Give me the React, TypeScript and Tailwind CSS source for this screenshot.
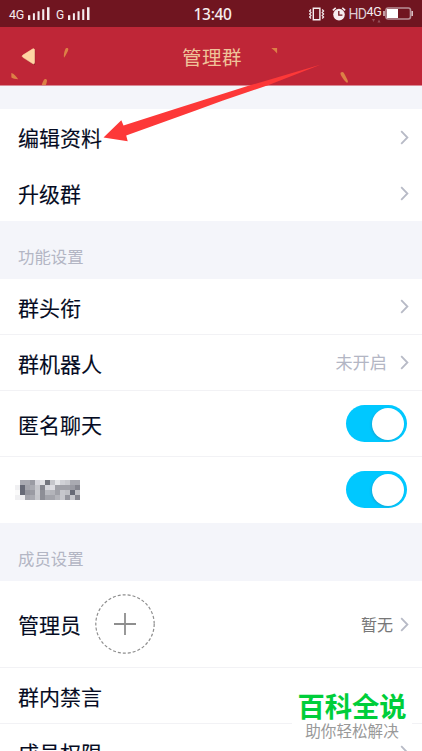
import React from "react";

const Chevron = () => (
  <svg className="h-[15px] w-[9px] shrink-0" viewBox="0 0 9 15" fill="none" stroke="#b7bac6" strokeWidth="1.8">
    <path d="M1.200 1.200 7.400 7.500 1.200 13.800" />
  </svg>
);

const Switch = () => (
  <div role="switch" aria-checked="true" className="flex h-[37px] w-[61px] items-center justify-end rounded-full bg-[#00c8ff] pr-[3px]">
    <span className="h-[32px] w-[32px] rounded-full bg-white shadow-[-1px_1px_2px_rgba(60,110,140,0.3)]" />
  </div>
);

const Row = ({ label, size, right }: { label: React.ReactNode; size: string; right?: React.ReactNode }) => (
  <div className={`flex shrink-0 items-center justify-between border-[#f2f2f5] bg-white pl-[18px] ${size}`}>
    <div className="flex items-center text-[21px] leading-[30px] text-[#050b22] [-webkit-text-stroke:0.12px_#050b22]">{label}</div>
    <div className="flex items-center">{right}</div>
  </div>
);

const Section = ({ children }: { children: React.ReactNode }) => (
  <div className="h-[58px] shrink-0 bg-[#f4f5fa] pt-[23px] pl-[18px] text-[16.400px] leading-[24px] text-[#b3b6c4]">{children}</div>
);

const Signal = () => (
  <svg className="h-[14px] w-[22px]" viewBox="0 0 22 14" fill="#f5edef">
    <path d="M0 8.300h2.300V13H0zM4.900 6.300h2v6.700h-2zM9.500 4.300h2.100V13H9.500zM14.200 2.300h2.100V13h-2.100zM19 .2h2.500V13H19z" />
  </svg>
);

const tones = [
  ["#ffffff", "#a9aab1", "#a9aab1", "#9a9ba3", "#d6d6dc", "#e2e2e6", "#74767f", "#c6c7cc", "#e6e7ea", "#d0d1d6", "#c9cacf", "#a9aab1", "#a9aab1"],
  ["#f0f0f2", "#676a76", "#a3a4ab", "#a9aab1", "#c6c7cc", "#85868f", "#d6d6dc", "#dddde2", "#a0a1a8", "#a0a1a8", "#a0a1a8", "#9a9ba3", "#85868f"],
  ["#fafafa", "#676a76", "#94959d", "#9a9ba3", "#c9cacf", "#8d8e96", "#b9bac0", "#b3b4ba", "#a0a1a8", "#c6c7cc", "#bfc0c5", "#676a76", "#bfc0c5"],
  ["#f0f0f2", "#ececee", "#a3a4ab", "#a9aab1", "#c6c7cc", "#8d8e96", "#a3a4ab", "#a3a4ab", "#b3b4ba", "#c6c7cc", "#94959d", "#c6c7cc", "#85868f"],
];

const Mosaic = () => (
  <div className="-ml-[3px] grid grid-cols-[repeat(13,5px)]">
    {tones.flat().map((c, i) => (
      <span key={i} className="h-[5px]" style={{ backgroundColor: c }} />
    ))}
  </div>
);

const StatusBar = () => (
  <div className="flex h-[27px] shrink-0 items-center bg-[#701520] font-['Roboto','Liberation_Sans',sans-serif] text-[#f5edef]">
    <div className="flex w-[193.500px] items-center pl-[9px]">
      <span className="w-[19px] pt-[3px] text-[12.500px] leading-[14px] tracking-[-0.300px]">4G</span>
      <Signal />
      <span className="ml-[6px] w-[12px] pt-[3px] text-[12px] leading-[14px]">G</span>
      <Signal />
    </div>
    <span className="w-[115.500px] font-['Noto_Sans',sans-serif] text-[15.500px] leading-[20px] font-medium tracking-[-0.300px]">13:40</span>
    <svg className="h-[14px] w-[16px]" viewBox="0 0 16 14" fill="none" stroke="#f5edef" strokeWidth="1.400">
      <path d="M4.300 1.200h6.600v11.600H4.300z" />
      <path d="M2 2.500.6 4 2 5.500.6 7 2 8.500.6 10 2 11.500M13.200 2.500l1.400 1.500-1.400 1.500L14.600 7l-1.400 1.500 1.400 1.500-1.400 1.500" strokeWidth="1.200" />
    </svg>
    <svg className="ml-[7px] h-[14px] w-[14px]" viewBox="0 0 14 14" fill="none">
      <circle cx="7" cy="7.600" r="5.800" fill="#f5edef" />
      <path d="M.8 3.400 3.700.9M13.200 3.400 10.300.9" stroke="#f5edef" strokeWidth="1.500" />
      <path d="M6.800 4v4.200h3.600" stroke="#701520" strokeWidth="1.300" />
    </svg>
    <span className="ml-[2.500px] w-[18px] text-[14px] leading-[16px] tracking-[-0.800px] text-[#dccbd0]">HD</span>
    <div className="flex h-[20px] w-[16px] flex-col">
      <span className="pt-[1px] text-[12.500px] leading-[14px] tracking-[-0.400px]">4G</span>
      <svg className="ml-[5px] h-[4px] w-[9px]" viewBox="0 0 9 4" fill="#93505a">
        <path d="M0 0h3L1.500 3zM5.500 3.500h3L7 .5z" />
      </svg>
    </div>
    <svg className="ml-[0.500px] h-[13px] w-[31px]" viewBox="0 0 31 13" fill="none">
      <rect x="3" y="1" width="24.500" height="11" rx="2.200" stroke="#b89097" strokeWidth="1.600" />
      <path d="M4 2h11v9H4z" fill="#fff" />
      <path d="M1 4v5M29.200 4v5" stroke="#d8bfc4" strokeWidth="1.600" />
    </svg>
  </div>
);

const Header = () => (
  <div className="relative flex h-[59px] shrink-0 items-center justify-center border-b border-[#d98a96] bg-[#bf2637]">
    <svg className="absolute inset-0 h-[58px] w-[422px]" viewBox="0 0 422 58">
      <path d="M34 23v12.500c0 1.500-1 1.700-2 1l-8.900-6c-.9-.7-.9-1.500 0-2.200l8.900-6c1-.7 2-.7 2 .7z" fill="#6f1822" opacity=".6" transform="translate(1.200 1)" />
      <path d="M34.500 23v12.500c0 1.500-1 1.700-2 1l-9.600-6.200c-.9-.7-.9-1.500 0-2.200l9.600-6c1-.7 2-.4 2 .9z" fill="#ffd5a3" stroke="#ffd5a3" strokeWidth=".6" />
      <g fill="#dc8046">
        <path d="M65.300 22.200c.5-1.600 3.200-1.500 3 .2-.2 2-2.500 5.500-4.300 8.400-.5-2.500.2-6 1.300-8.600z" />
        <path d="M11.300 46c2.800.7 4.500 3 6.900 6.200-3-.2-5.200-.6-6.800-1.700z" />
        <path d="M43.800 53c.8-1.800 3.300-1.200 3.200.7-.1 1.600-.6 3-1.200 4.300h-4c.3-1.500 1.200-3.300 2-5z" />
        <path d="M271.300 21h5.800v5.500c-1.800-2-3.700-4-5.800-5.500z" />
        <path d="M340.500 47c-.5-1.800 2.200-2.600 3.200-1.200 1.200 2 3.200 5.500 4.300 8.500l-.8 1.700c-2.500-1.800-5.600-6-6.700-9z" />
      </g>
    </svg>
    <span className="mr-[-2px] pt-[2px] text-[19.500px] leading-[28px] tracking-[0.500px] text-[#efc39a]">管理群</span>
  </div>
);

export default function App() {
  return (
    <div className="relative flex h-[751px] w-[422px] flex-col overflow-hidden bg-white font-['Noto_Sans_CJK_SC',sans-serif]">
      <StatusBar />
      <Header />
      <div className="h-[23px] shrink-0 bg-[#f4f5fa]" />
      <Row label="编辑资料" size="h-[56px] pr-[13px]" right={<Chevron />} />
      <Row label="升级群" size="h-[56px] pr-[13px]" right={<Chevron />} />
      <Section>功能设置</Section>
      <Row label={<span className="pt-[1px]">群头衔</span>} size="h-[56px] border-b pr-[13px]" right={<Chevron />} />
      <Row
        label={<span className="pt-[1px]">群机器人</span>}
        size="h-[56px] border-b pr-[13px]"
        right={
          <>
            <span className="mr-[13px] pb-[2px] text-[17.200px] leading-[24px] text-[#b3b6c4]">未开启</span>
            <Chevron />
          </>
        }
      />
      <Row label={<span>匿名聊天</span>} size="h-[66px] border-b pr-[15px]" right={<Switch />} />
      <Row label={<Mosaic />} size="h-[66px] pr-[15px] pb-[1px]" right={<Switch />} />
      <Section>成员设置</Section>
      <Row
        label={
          <>
            <span>管理员</span>
            <svg className="ml-[14px] h-[60px] w-[60px]" viewBox="0 0 60 60" fill="none" stroke="#8e8e8e">
              <circle cx="30" cy="30" r="29.200" strokeWidth="1.200" strokeDasharray="3 2" />
              <path d="M30 19v22M19 30h22" strokeWidth="1.800" />
            </svg>
          </>
        }
        size="h-[87px] border-b pr-[13px]"
        right={
          <>
            <span className="mr-[7px] text-[16px] leading-[24px] text-[#777777]">暂无</span>
            <Chevron />
          </>
        }
      />
      <Row label={<span className="pt-[1px]">群内禁言</span>} size="h-[56px] border-b pr-[13px]" />
      <Row label="成员权限" size="h-[56px] pr-[13px]" right={<Chevron />} />

      <svg className="absolute top-[60px] left-[100px] h-[85px] w-[225px]" viewBox="0 0 225 85">
        <path d="M3.500 77.500 21.300 60.200l2.200 5.400L75 49l75-23.700L221 4.500 168 25.300 123 40.500 95 50.800 26.200 75.500l1.500 5.700z" fill="#fd3838" />
      </svg>
      <div className="absolute top-[689px] left-[292px] flex h-[54px] w-[120px] flex-col items-center bg-white">
        <span className="h-[31px] text-[27.300px] leading-[33px] font-bold text-[#00ce3a]">百科全说</span>
        <span className="text-[15.600px] leading-[20px] text-[#999999]">助你轻松解决</span>
      </div>
    </div>
  );
}
